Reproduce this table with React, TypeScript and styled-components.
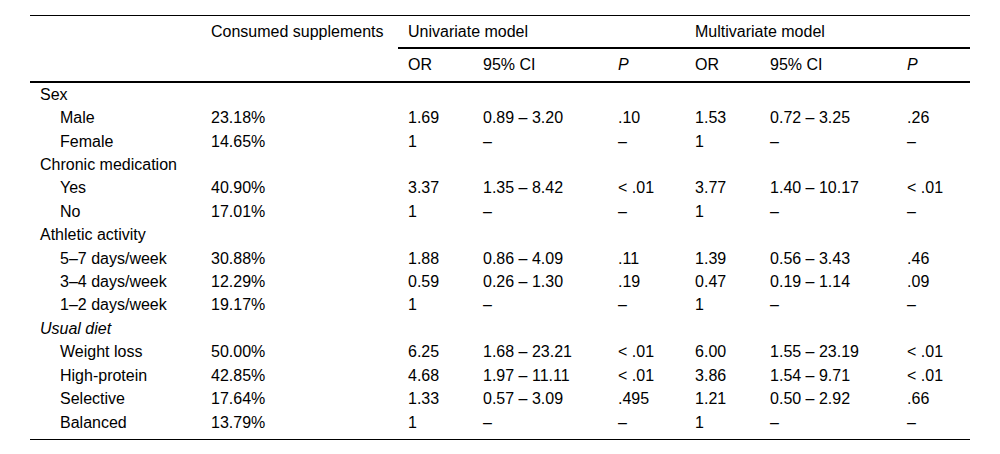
import React from 'react';
import styled, { createGlobalStyle } from 'styled-components';

const GlobalStyle = createGlobalStyle`
  html, body {
    margin: 0;
    padding: 0;
    background: #ffffff;
  }
  body {
    font-family: "Liberation Sans", Arial, sans-serif;
    color: #000;
  }
`;

const Page = styled.div`
  padding: 15px 30px 0 30px;
`;

const Table = styled.table`
  width: 940px;
  table-layout: fixed;
  border-collapse: separate;
  border-spacing: 0;
  border-top: 1px solid #000;
  border-bottom: 1px solid #000;
  font-size: 16px;
`;

const HeadCell = styled.th<{ $rule?: boolean }>`
  text-align: left;
  font-weight: 400;
  vertical-align: top;
  padding: 4px 0 4px 10px;
  line-height: 23.4px;
  white-space: nowrap;
  border-bottom: ${({ $rule }) => ($rule ? '2px solid #000' : '0')};
`;

const HeadRow = styled.tr<{ $last?: boolean }>`
  & > th {
    ${({ $last }) => ($last ? 'border-bottom: 2px solid #000;' : '')}
  }
`;

const Cell = styled.td<{ $indent?: boolean; $italic?: boolean }>`
  padding: 0 0 0 ${({ $indent }) => ($indent ? '30px' : '10px')};
  line-height: 23.4px;
  height: 23.4px;
  white-space: nowrap;
  font-style: ${({ $italic }) => ($italic ? 'italic' : 'normal')};
`;

const BodyRow = styled.tr`
  &:last-child > td {
    padding-bottom: 5px;
  }
`;

const Em = styled.span`
  font-style: italic;
`;

type Row =
  | { kind: 'group'; label: string; italic?: boolean }
  | { kind: 'item'; label: string; values: string[] };

const rows: Row[] = [
  { kind: 'group', label: 'Sex' },
  { kind: 'item', label: 'Male', values: ['23.18%', '1.69', '0.89 – 3.20', '.10', '1.53', '0.72 – 3.25', '.26'] },
  { kind: 'item', label: 'Female', values: ['14.65%', '1', '–', '–', '1', '–', '–'] },
  { kind: 'group', label: 'Chronic medication' },
  { kind: 'item', label: 'Yes', values: ['40.90%', '3.37', '1.35 – 8.42', '< .01', '3.77', '1.40 – 10.17', '< .01'] },
  { kind: 'item', label: 'No', values: ['17.01%', '1', '–', '–', '1', '–', '–'] },
  { kind: 'group', label: 'Athletic activity' },
  { kind: 'item', label: '5–7 days/week', values: ['30.88%', '1.88', '0.86 – 4.09', '.11', '1.39', '0.56 – 3.43', '.46'] },
  { kind: 'item', label: '3–4 days/week', values: ['12.29%', '0.59', '0.26 – 1.30', '.19', '0.47', '0.19 – 1.14', '.09'] },
  { kind: 'item', label: '1–2 days/week', values: ['19.17%', '1', '–', '–', '1', '–', '–'] },
  { kind: 'group', label: 'Usual diet', italic: true },
  { kind: 'item', label: 'Weight loss', values: ['50.00%', '6.25', '1.68 – 23.21', '< .01', '6.00', '1.55 – 23.19', '< .01'] },
  { kind: 'item', label: 'High-protein', values: ['42.85%', '4.68', '1.97 – 11.11', '< .01', '3.86', '1.54 – 9.71', '< .01'] },
  { kind: 'item', label: 'Selective', values: ['17.64%', '1.33', '0.57 – 3.09', '.495', '1.21', '0.50 – 2.92', '.66'] },
  { kind: 'item', label: 'Balanced', values: ['13.79%', '1', '–', '–', '1', '–', '–'] },
];

const widths = [171, 197, 75, 135, 77, 75, 137, 73];

const App: React.FC = () => {
  return (
    <Page>
      <GlobalStyle />
      <Table>
        <colgroup>
          {widths.map((w, i) => (
            <col key={i} style={{ width: w }} />
          ))}
        </colgroup>
        <thead>
          <HeadRow>
            <HeadCell />
            <HeadCell>Consumed supplements</HeadCell>
            <HeadCell colSpan={3} $rule>Univariate model</HeadCell>
            <HeadCell colSpan={3} $rule>Multivariate model</HeadCell>
          </HeadRow>
          <HeadRow $last>
            <HeadCell />
            <HeadCell />
            <HeadCell>OR</HeadCell>
            <HeadCell>95% CI</HeadCell>
            <HeadCell><Em>P</Em></HeadCell>
            <HeadCell>OR</HeadCell>
            <HeadCell>95% CI</HeadCell>
            <HeadCell><Em>P</Em></HeadCell>
          </HeadRow>
        </thead>
        <tbody>
          {rows.map((row, i) =>
            row.kind === 'group' ? (
              <BodyRow key={i}>
                <Cell colSpan={8} $italic={row.italic}>{row.label}</Cell>
              </BodyRow>
            ) : (
              <BodyRow key={i}>
                <Cell $indent>{row.label}</Cell>
                {row.values.map((v, j) => (
                  <Cell key={j}>{v}</Cell>
                ))}
              </BodyRow>
            )
          )}
        </tbody>
      </Table>
    </Page>
  );
};

export default App;
